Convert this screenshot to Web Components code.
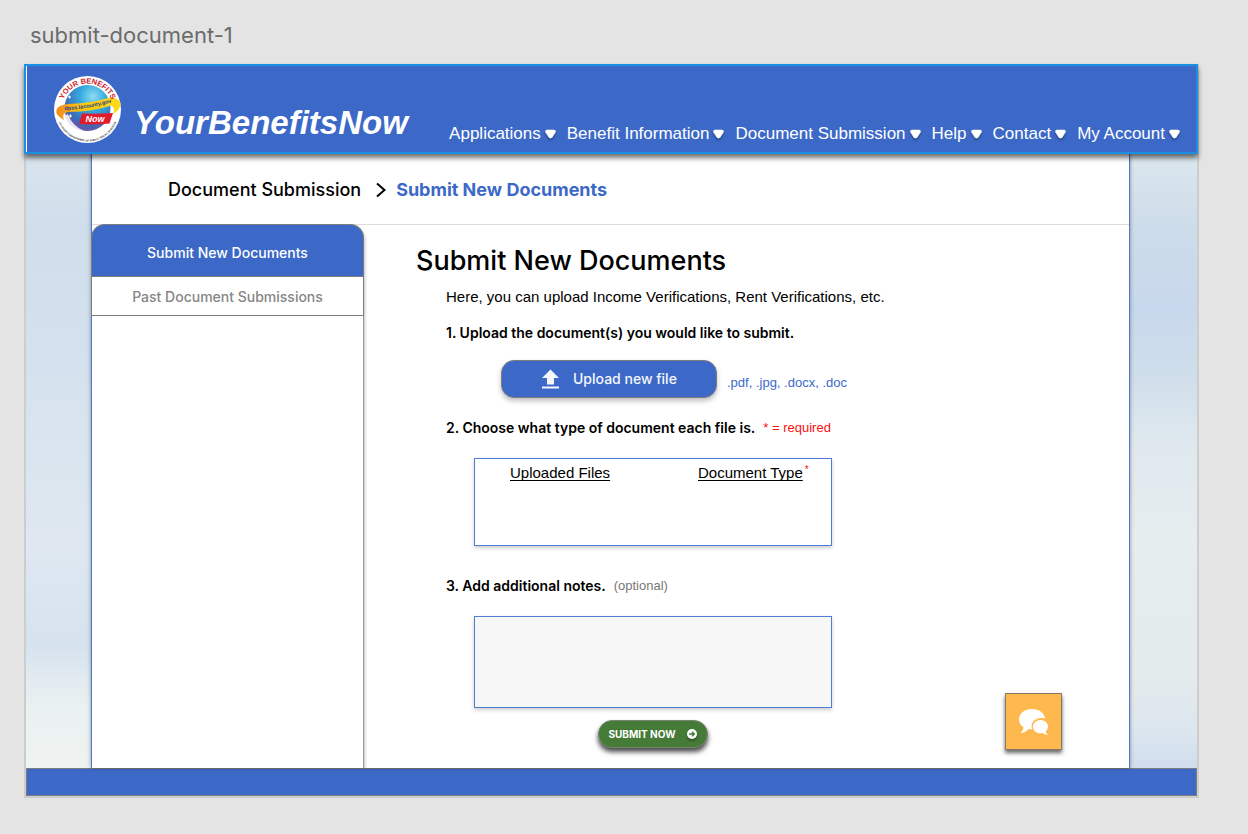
<!DOCTYPE html>
<html lang="en">
<head>
<meta charset="utf-8">
<meta name="viewport" content="width=device-width, initial-scale=1">
<title>submit-document-1</title>
<style>
  body {
    margin: 0;
    min-height: 100vh;
    background: #e4e4e4;
    color: #000;
    font-family: "Liberation Sans", Arial, sans-serif;
    --blue: #3c69c8;
    --edge: #7c7c7c;
    --ui: Inter, "Liberation Sans", sans-serif;
  }
</style>
</head>
<body>
<art-board label="submit-document-1">
  <site-header slot="header">
    <nav-item>Applications</nav-item>
    <nav-item>Benefit Information</nav-item>
    <nav-item>Document Submission</nav-item>
    <nav-item>Help</nav-item>
    <nav-item>Contact</nav-item>
    <nav-item>My Account</nav-item>
  </site-header>
  <page-panel>
    <bread-crumb slot="crumb" parent="Document Submission" current="Submit New Documents"></bread-crumb>
    <side-menu slot="side"></side-menu>
    <submit-form></submit-form>
    <chat-button slot="float"></chat-button>
  </page-panel>
</art-board>

<script>
function define(name, html) {
  const template = document.createElement('template');
  template.innerHTML = html;
  customElements.define(name, class extends HTMLElement {
    constructor() {
      super();
      this.attachShadow({ mode: 'open' }).append(template.content.cloneNode(true));
    }
    connectedCallback() {
      for (const el of this.shadowRoot.querySelectorAll('[data-attr]')) {
        el.textContent = this.getAttribute(el.dataset.attr);
      }
    }
  });
}

define('art-board', `
  <style>
    :host { display: block; padding: 0 49px 36px 24px; }
    .label { margin: 0; padding: 21px 6px 15px; font: 400 22px/28px var(--ui); color: #6b6b6b; }
    .board { border: 2px solid #cdcdcd; border-top: 0; }
    .body { display: grid; grid-template-columns: 65px minmax(0, 1fr) 67px; }
    .sky-left { background: linear-gradient(#d9e4ec, #d0deec 12%, #d3e0ee 30%, #d9e4ee 45%, #dfe8f1 64%, #d6e2ee 80%, #eaf1f1 90%, #eff3f1); }
    .sky-right { background: linear-gradient(#dce7ee, #cddcea 12%, #c8d8ec 25%, #cfdeeb 36%, #dfe8ee 47%, #e5edef 62%, #e4ebec 85%, #dce6ef 94%, #cfdded); }
    footer { height: 26px; background: var(--blue); border: 1px solid var(--edge); }
  </style>
  <p class="label" data-attr="label"></p>
  <div class="board">
    <slot name="header"></slot>
    <div class="body">
      <div class="sky-left"></div>
      <slot></slot>
      <div class="sky-right"></div>
    </div>
    <footer></footer>
  </div>`);

define('site-header', `
  <style>
    :host {
      display: flex; align-items: flex-end; position: relative; z-index: 1;
      box-sizing: border-box; min-height: 90px; margin: 0 -1px 0 -2px; padding: 10px 16px 9px 28px;
      border: 2px solid #1b90e2; background: var(--blue);
      box-shadow: inset 1px 0 #fff, 0 4px 5px rgba(0,0,0,.55);
    }
    svg { flex: none; width: 67px; height: 67px; }
    .brand { margin-left: 13px; font: italic 700 33px/40px "Liberation Sans", Arial, sans-serif; color: #fff; text-decoration: none; }
    nav { display: flex; gap: 11px; margin-left: auto; }
  </style>
  <svg viewBox="0 0 67 67" role="img" aria-label="Your Benefits Now">
    <defs>
      <radialGradient id="globe" cx=".62" cy=".25" r=".8">
        <stop offset="0" stop-color="#8fdcf5"/><stop offset=".35" stop-color="#35ace0"/>
        <stop offset=".75" stop-color="#3c6cb8"/><stop offset="1" stop-color="#6c4fa0"/>
      </radialGradient>
      <linearGradient id="gold"><stop offset="0" stop-color="#f28a1c"/><stop offset=".4" stop-color="#fdc70c"/><stop offset="1" stop-color="#ffdb1a"/></linearGradient>
      <path id="top" d="M7.500 33.500A26 26 0 0 1 59.500 33.500"/>
      <path id="bottom" d="M3 40A31 31 0 0 0 64 40"/>
      <path id="band" d="M4 34.200Q34 34 64 24.500"/>
    </defs>
    <circle cx="33.500" cy="33.500" r="33.500" fill="#fff"/>
    <circle cx="33.500" cy="32" r="23" fill="url(#globe)"/>
    <path d="M11 40Q15 53 30 54.800Q18 50 14 38z" fill="#e9e4f2"/>
    <path d="M14 21h3M15.500 19.500v3M15 40h3M16.500 38.500v3" stroke="#fff"/>
    <path d="M10 44Q1 39 2.500 34Q4 29 14 28Q39 27 56 21.500Q66 22 66.500 28Q66 34 59 38Q62 32 57 29.500Q40 35.500 14 36Q7 37 10 44z" fill="url(#gold)"/>
    <path d="M28 37.500Q43 38 59 37L55.500 47.500Q40 49 25 48z" fill="#e21b2d"/>
    <text font-family="Liberation Sans" font-size="7.500" font-weight="700" fill="#cf1b2b" text-anchor="middle"><textPath href="#top" startOffset="50%">YOUR BENEFITS</textPath></text>
    <text font-family="Liberation Sans" font-size="5.500" font-weight="700" fill="#28418c" text-anchor="middle"><textPath href="#band" startOffset="50%">dpss.lacounty.gov</textPath></text>
    <text x="41" y="46" font-family="Liberation Sans" font-size="9" font-weight="700" font-style="italic" fill="#fff" text-anchor="middle">Now</text>
    <text font-family="Liberation Sans" font-size="2.600" font-weight="700" fill="#333" text-anchor="middle"><textPath href="#bottom" startOffset="50%">LA COUNTY DEPARTMENT OF PUBLIC SOCIAL SERVICES</textPath></text>
  </svg>
  <a class="brand" href="#home">YourBenefitsNow</a>
  <nav aria-label="Main"><slot></slot></nav>`);

define('nav-item', `
  <style>
    :host { display: block; white-space: nowrap; }
    a { display: flex; align-items: center; gap: 4px; padding-top: 2px; font-size: 17px; line-height: 18px; color: #fff; text-decoration: none; }
    svg { width: 11px; height: 10px; overflow: visible; filter: drop-shadow(0 2px 1px rgba(0,0,0,.3)); }
  </style>
  <a href="#menu"><span><slot></slot></span>
    <svg viewBox="0 0 11 10" aria-hidden="true"><path d="M2 .8h7q2 .2 1.800 2.200L7.300 8.600q-1.800 1.600-3.600 0L.2 3Q0 1 2 .8z" fill="#fff"/></svg>
  </a>`);

define('page-panel', `
  <style>
    :host {
      display: block; position: relative; background: #fff;
      border: solid #4a78cf; border-width: 0 1px;
      box-shadow: 0 0 4px rgba(0,0,0,.4);
    }
    .columns { display: grid; grid-template-columns: 273px minmax(0, 1fr); margin-top: -1px; margin-left: -1px; }
    main { padding: 21px 20px 20px 52px; }
  </style>
  <slot name="crumb"></slot>
  <div class="columns">
    <slot name="side"></slot>
    <main><slot></slot></main>
  </div>
  <slot name="float"></slot>`);

define('bread-crumb', `
  <style>
    :host { display: block; border-bottom: 1px solid #dcdcdc; }
    nav { display: flex; align-items: center; padding: 24px 76px 22px; font: 500 18px/24px var(--ui); }
    a { color: #000; text-decoration: none; }
    svg { width: 10px; height: 16px; margin: 0 10px 0 15px; }
    b { font-weight: 700; color: var(--blue); }
  </style>
  <nav aria-label="Breadcrumb">
    <a href="#documents" data-attr="parent"></a>
    <svg viewBox="0 0 10 16" aria-hidden="true"><path d="M1 1.500L8.500 8L1 14.500" fill="none" stroke="#000" stroke-width="2"/></svg>
    <b aria-current="page" data-attr="current"></b>
  </nav>`);

define('side-menu', `
  <style>
    :host { display: block; box-sizing: border-box; border-right: 1px solid #999; border-top-right-radius: 14px; box-shadow: 1px 3px 3px rgba(0,0,0,.25); clip-path: inset(0 -6px 0 0); }
    a { display: block; box-sizing: border-box; text-align: center; text-decoration: none; font: 500 14px/20px var(--ui); border: 1px solid var(--edge); margin-right: -1px; }
    .active { padding: 18px 0 13px; color: #fff; background: var(--blue); border-radius: 14px 14px 0 0; border-bottom: 0; }
    .other { padding: 10px 0 8px; color: #858585; }
  </style>
  <nav aria-label="Documents">
    <a class="active" href="#new" aria-current="page">Submit New Documents</a>
    <a class="other" href="#past">Past Document Submissions</a>
  </nav>`);

define('submit-form', `
  <style>
    :host { display: block; }
    h1 { margin: 0; font: 500 27px/32px var(--ui); }
    .intro { margin: 10px 0 16px 30px; font-size: 15px; line-height: 20px; }
    form { margin-left: 30px; }
    .step { display: flex; align-items: center; gap: 8px; margin: 0; font: 600 14px/20px var(--ui); }
    .step small { font: 400 13px/20px "Liberation Sans", Arial, sans-serif; }
    .step small.optional { color: #777; }
    .required { color: #fb1010; }
    .upload-row { display: flex; align-items: center; gap: 10px; margin: 17px 0 20px 55px; }
    .upload {
      display: flex; align-items: center; gap: 14px; box-sizing: border-box; width: 216px; height: 38px; padding: 0 0 0 40px;
      font: 500 14px/20px var(--ui); color: #f4f6fb; background: var(--blue);
      border: 1px solid var(--edge); border-radius: 13px; box-shadow: 0 3px 5px rgba(0,0,0,.25);
    }
    .upload svg { width: 17px; height: 20px; }
    .formats { padding-top: 8px; font-size: 13px; line-height: 16px; color: var(--blue); }
    .box { box-sizing: border-box; display: block; width: 100%; max-width: 358px; border: 1px solid #4f7dd3; box-shadow: 0 2px 4px rgba(0,0,0,.2); }
    .fields { margin: 20px 0 30px 28px; }
    .files { height: 88px; padding-top: 4px; }
    table { width: 100%; table-layout: fixed; border-collapse: collapse; }
    th { padding: 0 0 0 35px; text-align: left; font: 400 15px/20px "Liberation Sans", Arial, sans-serif; white-space: nowrap; }
    th:first-child { width: 153px; }
    th span { text-decoration: underline; text-underline-offset: 2px; text-decoration-skip-ink: none; }
    th sup { margin-left: 2px; font-size: 10px; line-height: 0; vertical-align: 5px; }
    textarea { height: 92px; margin: 0; padding: 8px; resize: none; border-radius: 0; background: #f7f7f7; font: 400 15px/20px "Liberation Sans", Arial, sans-serif; }
    .last { margin-bottom: 12px; }
    .actions { display: flex; justify-content: center; max-width: 358px; margin-left: 28px; }
    .submit {
      display: flex; align-items: center; gap: 11px; box-sizing: border-box; height: 28px; padding: 0 10px 0 9px; white-space: nowrap;
      font: 700 10px/12px var(--ui); color: #fff; background: #457b37;
      border: 1px solid #77866f; border-radius: 14px; box-shadow: 0 4px 5px rgba(0,0,0,.7);
    }
    .submit svg { width: 10px; height: 10px; filter: drop-shadow(0 2px 1px rgba(0,0,0,.35)); }
  </style>
  <h1>Submit New Documents</h1>
  <p class="intro">Here, you can upload Income Verifications, Rent Verifications, etc.</p>
  <form>
    <h2 class="step">1. Upload the document(s) you would like to submit.</h2>
    <div class="upload-row">
      <button class="upload" type="button">
        <svg viewBox="0 0 17 20" aria-hidden="true"><path d="M8.500 .5L17 9h-5v6.500H5V9H0zM0 17.500h17v2H0z" fill="#f4f6fb"/></svg>
        Upload new file
      </button>
      <span class="formats">.pdf, .jpg, .docx, .doc</span>
    </div>
    <h2 class="step">2. Choose what type of document each file is. <small class="required">* = required</small></h2>
    <div class="fields">
      <div class="box files">
        <table>
          <thead><tr>
            <th scope="col"><span>Uploaded Files</span></th>
            <th scope="col"><span>Document Type</span><sup class="required">*</sup></th>
          </tr></thead>
        </table>
      </div>
    </div>
    <label class="step" for="notes">3. Add additional notes. <small class="optional">(optional)</small></label>
    <div class="fields last"><textarea class="box" id="notes"></textarea></div>
    <div class="actions">
      <button class="submit" type="submit">SUBMIT NOW
        <svg viewBox="0 0 10 10" aria-hidden="true"><circle cx="5" cy="5" r="5" fill="#fff"/><path d="M2 5h5M5 2.700L7.300 5L5 7.300" fill="none" stroke="#457b37" stroke-width="1.500"/></svg>
      </button>
    </div>
  </form>`);

define('chat-button', `
  <style>
    :host { display: block; position: absolute; right: 67px; bottom: 18px; }
    button {
      display: grid; place-items: center; width: 57px; height: 57px; padding: 0;
      background: #fdb94e; border: 1px solid #85786a; box-shadow: 0 3px 4px rgba(0,0,0,.6);
    }
    svg { width: 30px; height: 26px; }
  </style>
  <button type="button" aria-label="Chat">
    <svg viewBox="0 0 30 26" fill="#fff" aria-hidden="true">
      <path d="M13 0C20 0 25.500 4 26 9.500Q24 8.800 21.500 9C16 9.500 12.500 13 12.600 17.500Q12.700 19 13.200 20.300Q11 20.400 9.500 20Q6 24 1.500 24Q4.500 21.500 4.500 18.200Q0 15.500 0 10.400C0 4.500 5.500 0 13 0z"/>
      <path d="M21.500 11C26 11 29 14 29 17.600Q29 20.800 26.700 22.600Q27 24.500 29 25.800Q25.500 26 23.500 24.100C18 25 14 22 14 17.700C14 14 17.300 11 21.500 11z"/>
    </svg>
  </button>`);
</script>
</body>
</html>
